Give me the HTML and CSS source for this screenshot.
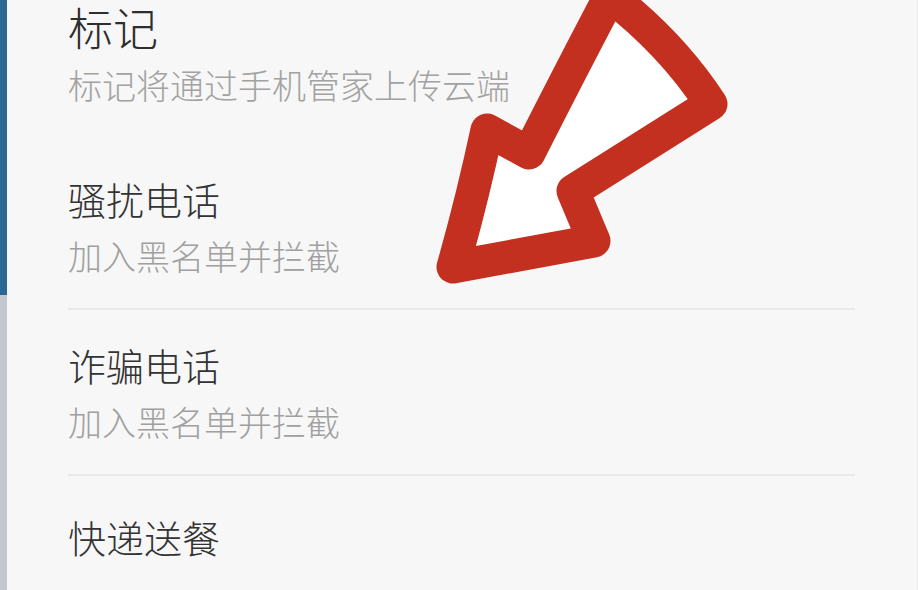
FILE: index.html
```html
<!DOCTYPE html>
<html lang="zh-CN">
<head>
    <meta charset="UTF-8">
    <meta name="viewport" content="width=device-width, initial-scale=1.0">
    <title>标记</title>
    <link rel="stylesheet" href="styles.css">
</head>
<body>
    <div class="screen">
        <div class="side-bar">
            <div class="side-blue"></div>
            <div class="side-gray"></div>
        </div>
        <div class="list">
            <div class="head">
                <div class="head-title">标记</div>
                <div class="head-sub">标记将通过手机管家上传云端</div>
            </div>
            <div class="item">
                <div class="item-title">骚扰电话</div>
                <div class="item-sub">加入黑名单并拦截</div>
            </div>
            <div class="item">
                <div class="item-title">诈骗电话</div>
                <div class="item-sub">加入黑名单并拦截</div>
            </div>
            <div class="item last">
                <div class="item-title">快递送餐</div>
            </div>
        </div>
        <!-- red arrow drawn over the list -->
        <svg class="arrow" viewBox="0 0 918 590" width="918" height="590">
            <path d="M610 -4 Q672 44 711 104 L573 191 L594 241 L453 267 Q472 200 487 130 L529 153 Q570 72 610 -4 Z"
                  fill="#ffffff" stroke="#c4301f" stroke-width="33" stroke-linejoin="round"/>
        </svg>
    </div>
</body>
</html>
```

FILE: styles.css
```css
body {
    margin: 0;
    background-color: #f7f7f7;
    font-family: "Noto Sans CJK SC", "Noto Sans", sans-serif;
    font-weight: 300;
    overflow: hidden;
}
.screen {
    position: relative;
    display: flex;
    width: 918px;
    height: 590px;
    box-sizing: border-box;
    border-right: 1px solid #ebebeb;
}
.side-bar {
    display: flex;
    flex-direction: column;
    width: 7px;
    flex-shrink: 0;
}
.side-blue {
    height: 295px;
    background-color: #2b6894;
}
.side-gray {
    flex: 1;
    background-color: #c3c7ce;
}
.list {
    flex: 1;
    padding-left: 61px;
    padding-right: 62px;
}
.head {
    padding-top: 2px;
    padding-bottom: 72px;
}
.head-title {
    font-size: 45px;
    line-height: 50px;
    color: #2e2e2e;
}
.head-sub {
    margin-top: 13px;
    font-size: 34px;
    line-height: 40px;
    color: #a2a2a2;
}
.item {
    padding: 0 0 32px 0;
    border-bottom: 2px solid #e9e9e9;
    margin-bottom: 33px;
}
.item.last {
    border-bottom: none;
    padding-top: 6px;
}
.item-title {
    font-size: 38px;
    line-height: 44px;
    color: #333333;
}
.item-sub {
    margin-top: 15px;
    font-size: 34px;
    line-height: 40px;
    color: #a0a0a0;
}
.arrow {
    position: absolute;
    left: 0;
    top: 0;
    pointer-events: none;
}
```
